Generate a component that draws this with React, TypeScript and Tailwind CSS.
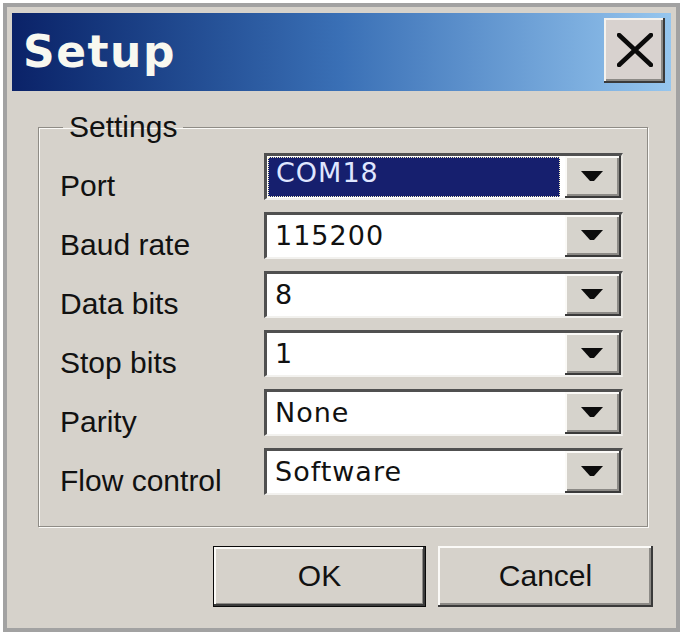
import React from "react";

const rows: { label: string; value: string; selected?: boolean }[] = [
  { label: "Port", value: "COM18", selected: true },
  { label: "Baud rate", value: "115200" },
  { label: "Data bits", value: "8" },
  { label: "Stop bits", value: "1" },
  { label: "Parity", value: "None" },
  { label: "Flow control", value: "Software" },
];

const sans = { fontFamily: '"Liberation Sans", Arial, sans-serif' };
const deja = { fontFamily: '"DejaVu Sans", Verdana, sans-serif' };

function DropButton() {
  return (
    <div className="w-[56px] self-stretch bg-[#d6d3cc] flex items-center justify-center shadow-[inset_-2px_-2px_0_#3a3a3a,inset_2px_2px_0_#fbfaf7,inset_-4px_-4px_0_#8c8a86]">
      <svg width="22" height="10" viewBox="0 0 22 10" className="-mt-[2px] -ml-[2px]">
        <polygon points="0,0 22,0 13,10 9,10" fill="#0c0c0c" />
      </svg>
    </div>
  );
}

function Combo({ value, selected }: { value: string; selected?: boolean }) {
  return (
    <div className="w-[359px] h-[47px] flex bg-white border-t-[3px] border-l-[3px] border-b-2 border-r-2 border-t-[#505050] border-l-[#505050] border-b-[#f2f1ee] border-r-[#e8e6e1]">
      <div className="flex-1 flex">
        {selected ? (
          <div className="flex-1 mt-[1px] mb-[1px] ml-[1px] mr-[5px] bg-[#161f6e] outline-1 outline-dotted outline-[#f3efc4] -outline-offset-1 pl-[8px] pt-[2px]">
            <span className="text-[27px] leading-[27px] tracking-[1px] text-[#dfe6ff]" style={deja}>
              {value}
            </span>
          </div>
        ) : (
          <div className="flex-1 pl-[8px] pt-[7px]">
            <span className="text-[27px] leading-[27px] tracking-[1px] text-[#111]" style={deja}>
              {value}
            </span>
          </div>
        )}
      </div>
      <DropButton />
    </div>
  );
}

export default function App() {
  return (
    <div className="w-[683px] h-[635px] bg-white pt-[3px] pl-[3px]">
      <div className="w-[677px] h-[629px] box-border border-4 border-[#a2a2a2] bg-[#d6d2cb] px-[5px] pt-[6px] flex flex-col">
        {/* Title bar */}
        <div className="h-[78px] flex items-start justify-between bg-gradient-to-r from-[#0b2268] via-[#3a70b6] via-50% to-[#96c6ee] pl-[11px] pr-[6px]">
          <span
            className="mt-[15px] text-[44px] leading-[48px] font-bold tracking-[1.5px] text-[#f8f8f0]"
            style={deja}
          >
            Setup
          </span>
          <div className="mt-[5px] w-[61px] h-[65px] bg-[#d8d2cf] flex items-center justify-center shadow-[inset_-2px_-2px_0_#3a3a3a,inset_2px_2px_0_#f4f2ee,inset_-4px_-4px_0_#8c8a86]">
            <svg width="36" height="34" viewBox="0 0 36 34" className="-mt-[2px]">
              <path d="M2 2 L34 32 M34 2 L2 32" stroke="#0a0a0a" strokeWidth="4.5" strokeLinecap="round" />
            </svg>
          </div>
        </div>

        {/* Group box */}
        <fieldset className="mt-[21px] ml-[26px] w-[610px] border border-[#8f8c86] shadow-[inset_1px_1px_0_#fbfaf7,1px_1px_0_#fbfaf7] pl-[21px] pt-[11px] pb-[31px]">
          <legend
            className="ml-[3px] px-[6px] text-[30px] leading-[30px] text-[#111]"
            style={sans}
          >
            Settings
          </legend>
          <div className="flex flex-col gap-[12px]">
            {rows.map((r) => (
              <div key={r.label} className="flex h-[47px]">
                <div
                  className="w-[204px] pt-[18px] text-[30px] leading-[30px] text-[#111]"
                  style={sans}
                >
                  {r.label}
                </div>
                <Combo value={r.value} selected={r.selected} />
              </div>
            ))}
          </div>
        </fieldset>

        {/* Buttons */}
        <div className="mt-[19px] flex justify-end gap-[12px] pr-[18px]">
          <div className="w-[213px] h-[61px] border border-[#0a0a0a] bg-[#d6d2cb] flex items-center justify-center shadow-[inset_-2px_-2px_0_#3a3a3a,inset_2px_2px_0_#fbfaf7,inset_-3px_-3px_0_#8c8a86]">
            <span className="text-[30px] leading-[30px] text-[#111] -mt-[2px]" style={sans}>
              OK
            </span>
          </div>
          <div className="w-[215px] h-[61px] bg-[#d6d2cb] flex items-center justify-center shadow-[inset_-2px_-2px_0_#3a3a3a,inset_2px_2px_0_#fbfaf7,inset_-4px_-4px_0_#8c8a86]">
            <span className="text-[30px] leading-[30px] text-[#111] -mt-[2px]" style={sans}>
              Cancel
            </span>
          </div>
        </div>
      </div>
    </div>
  );
}
